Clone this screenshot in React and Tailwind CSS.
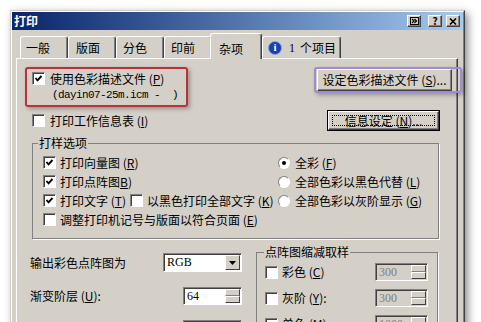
import React from 'react'

const U = ({ children }) => <span className="underline underline-offset-1">{children}</span>

function Check({ checked }) {
  return (
    <span className="w-[13px] h-[13px] shrink-0 bg-white border border-t-[#808080] border-l-[#808080] border-b-white border-r-white shadow-[inset_1px_1px_0_#404040] flex items-center justify-center">
      {checked && (
        <svg width="9" height="9" viewBox="0 0 9 9">
          <path d="M1.5 4 L3.5 6.3 L7.5 2" fill="none" stroke="#000" strokeWidth="1.9" />
        </svg>
      )}
    </span>
  )
}

function Radio({ checked }) {
  return (
    <span className="w-[12px] h-[12px] shrink-0 rounded-full bg-white border border-t-[#808080] border-l-[#808080] border-b-white border-r-white flex items-center justify-center">
      {checked && <span className="w-[4px] h-[4px] rounded-full bg-black" />}
    </span>
  )
}

function TitleBtn({ children }) {
  return (
    <span className="w-[14px] h-[12px] bg-[#d4d0c8] border border-t-white border-l-white border-r-[#404040] border-b-[#404040] shadow-[inset_-1px_-1px_0_#808080] flex items-center justify-center text-[10px] font-bold leading-none text-black">
      {children}
    </span>
  )
}

function Spin({ value, disabled, cls }) {
  return (
    <div className={`${cls} h-[18px] flex border border-t-[#808080] border-l-[#808080] border-b-white border-r-white shadow-[inset_1px_1px_0_#404040] ${disabled ? 'bg-[#d4d0c8] text-[#808080]' : 'bg-white text-black'}`}>
      <span className="flex-1 pl-[3px] leading-[16px] font-['Liberation_Serif',serif] text-[12px]">{value}</span>
      <span className="w-[16px] flex flex-col py-[1px] pr-[1px]">
        <span className="flex-1 bg-[#d4d0c8] border border-t-white border-l-white border-r-[#404040] border-b-[#808080]" />
        <span className="flex-1 bg-[#d4d0c8] border border-t-white border-l-white border-r-[#404040] border-b-[#404040]" />
      </span>
    </div>
  )
}

const TABS = [
  { label: '一般', cls: 'pl-[5px]' },
  { label: '版面', cls: 'pl-[7px]' },
  { label: '分色', cls: 'pl-[6px]' },
  { label: '印前', cls: 'pl-[6px]' },
]

export default function App() {
  return (
    <div className="relative w-[481px] h-[322px] overflow-hidden bg-white pl-[10px] pt-[10px] font-['Noto_Sans_CJK_SC','Liberation_Sans',sans-serif] text-[12px] leading-[14px] text-black">
      <div className="w-[455px] h-[340px] bg-[#d4d0c8] border border-t-[#d4d0c8] border-l-[#d4d0c8] border-r-[#404040] border-b-[#404040] shadow-[3px_3px_8px_rgba(0,0,0,0.45)]">
        <div className="h-full flex flex-col border border-t-white border-l-white border-r-[#808080] border-b-[#808080]">
          {/* Title bar */}
          <div className="h-[18px] flex items-center justify-between pl-[2px] pr-[3px] bg-gradient-to-r from-[#0a246a] to-[#a6caf0]">
            <span className="text-white font-bold text-[12px]">打印</span>
            <div className="flex items-center">
              <TitleBtn>
                <svg width="9" height="8" viewBox="0 0 9 8">
                  <rect x="0.5" y="0.5" width="8" height="7" fill="none" stroke="#000" />
                  <path d="M2 2 L4 4 L2 6 M4.5 2 L6.5 4 L4.5 6" fill="none" stroke="#000" strokeWidth="1.2" />
                </svg>
              </TitleBtn>
              <span className="w-[7px]" />
              <TitleBtn>?</TitleBtn>
              <span className="w-[4px]" />
              <TitleBtn>
                <svg width="8" height="7" viewBox="0 0 8 7">
                  <path d="M1 0.5 L7 6.5 M7 0.5 L1 6.5" stroke="#000" strokeWidth="1.6" />
                </svg>
              </TitleBtn>
            </div>
          </div>

          {/* Tabs */}
          <div className="h-[28px] flex items-end pl-[8px]">
            {TABS.map(({ label, cls }) => (
              <div key={label} className={`w-[48px] h-[22px] flex items-center bg-[#d4d0c8] border-t border-l border-r border-t-white border-l-white border-r-[#404040] rounded-t-[3px] shadow-[inset_-1px_0_0_#808080] ${cls}`}>
                {label}
              </div>
            ))}
            <div className="relative z-10 w-[52px] -ml-[2px] h-[26px] -mb-[1px] pl-[8px] pt-[8px] bg-[#d4d0c8] border-t border-l border-r border-t-white border-l-white border-r-[#404040] rounded-t-[3px] shadow-[inset_-1px_0_0_#808080]">
              杂项
            </div>
            <div className="w-[79px] h-[22px] flex items-center pl-[5px] bg-[#d4d0c8] border-t border-l border-r border-t-white border-l-white border-r-[#404040] rounded-t-[3px] shadow-[inset_-1px_0_0_#808080]">
              <span className="w-[14px] h-[14px] rounded-full bg-[#1740b0] border border-[#8aa0e0] flex items-center justify-center text-white font-bold text-[11px] leading-none font-['Liberation_Serif',serif]">i</span>
              <span className="ml-[7px] font-['Liberation_Serif',serif]">1</span>
              <span className="ml-[5px]">个项目</span>
            </div>
          </div>

          {/* Panel */}
          <div className="flex-1 ml-[4px] mr-[5px] pl-[15px] pt-[10px] border border-t-white border-l-white border-r-[#404040] border-b-[#404040] shadow-[inset_-1px_-1px_0_#808080]">
            <div className="flex">
              <div className="w-[285px] pt-[3px]">
                <div className="h-[13px] flex items-center gap-[5px]">
                  <Check checked />
                  <span>使用色彩描述文件 (<U>P</U>)</span>
                </div>
                <div className="ml-[20px] mt-[3px] h-[14px] leading-[14px] font-['Liberation_Mono',monospace] text-[11px] tracking-[-0.6px] whitespace-pre">(dayin07-25m.icm -  )</div>
                <div className="mt-[12px] h-[13px] flex items-center gap-[5px]">
                  <Check />
                  <span>打印工作信息表 (<U>I</U>)</span>
                </div>
              </div>
              <div className="flex flex-col">
                <div className="w-[135px] h-[22px] flex items-center justify-center bg-[#d4d0c8] border border-t-white border-l-white border-r-[#404040] border-b-[#404040] shadow-[inset_-1px_-1px_0_#808080] whitespace-nowrap">
                  设定色彩描述文件 (<U>S</U>)...
                </div>
                <div className="ml-[10px] mt-[19px] w-[113px] h-[21px] border border-black">
                  <div className="h-full flex items-center justify-center p-[3px] border border-t-white border-l-white border-r-[#404040] border-b-[#404040] shadow-[inset_-1px_-1px_0_#808080]">
                    <span className="w-full h-full flex items-center justify-center border border-dotted border-black whitespace-nowrap">
                      信息设定 (<U>N</U>)...
                    </span>
                  </div>
                </div>
              </div>
            </div>

            {/* 打样选项 */}
            <fieldset className="mt-[5px] w-[407px] border border-[#808080] shadow-[1px_1px_0_white]">
              <legend className="ml-[5px] px-[1px] leading-[14px]">打样选项</legend>
              <div className="pl-[10px] pt-[6px] pb-[12px] flex flex-col gap-[6px]">
                <div className="h-[13px] flex items-center">
                  <div className="w-[235px] flex items-center gap-[4px]">
                    <Check checked />
                    <span>打印向量图 (<U>R</U>)</span>
                  </div>
                  <Radio checked />
                  <span className="ml-[5px]">全彩 (<U>F</U>)</span>
                </div>
                <div className="h-[13px] flex items-center">
                  <div className="w-[235px] flex items-center gap-[4px]">
                    <Check checked />
                    <span>打印点阵图<U>B</U>)</span>
                  </div>
                  <Radio />
                  <span className="ml-[5px]">全部色彩以黑色代替 (<U>L</U>)</span>
                </div>
                <div className="h-[13px] flex items-center">
                  <div className="w-[235px] shrink-0 flex items-center whitespace-nowrap">
                    <div className="w-[87px] flex items-center gap-[4px]">
                      <Check checked />
                      <span>打印文字 (<U>T</U>)</span>
                    </div>
                    <Check />
                    <span className="ml-[4px]">以黑色打印全部文字 (<U>K</U>)</span>
                  </div>
                  <Radio />
                  <span className="ml-[5px]">全部色彩以灰阶显示 (<U>G</U>)</span>
                </div>
                <div className="h-[13px] flex items-center gap-[4px]">
                  <Check />
                  <span>调整打印机记号与版面以符合页面 (<U>E</U>)</span>
                </div>
              </div>
            </fieldset>

            {/* Bottom section */}
            <div className="mt-[6px] flex">
              <div className="w-[224px] pt-[8px]">
                <div className="h-[19px] flex items-center">
                  <span className="w-[131px] -ml-[2px]">输出彩色点阵图为</span>
                  <div className="w-[79px] h-[19px] ml-[2px] flex bg-white border border-t-[#808080] border-l-[#808080] border-b-white border-r-white shadow-[inset_1px_1px_0_#404040]">
                    <span className="flex-1 pl-[3px] leading-[17px] font-['Liberation_Serif',serif] text-[12px]">RGB</span>
                    <span className="w-[15px] m-[1px] bg-[#d4d0c8] border border-t-white border-l-white border-r-[#404040] border-b-[#404040] flex items-center justify-center">
                      <svg width="7" height="4" viewBox="0 0 7 4"><path d="M0 0 H7 L3.5 4 Z" fill="#000" /></svg>
                    </span>
                  </div>
                </div>
                <div className="mt-[15px] h-[18px] flex items-center">
                  <span className="w-[151px] -ml-[2px]">渐变阶层 (<U>U</U>):</span>
                  <Spin value="64" cls="w-[59px] ml-[2px]" />
                </div>
                <div className="mt-[15px] h-[18px] flex items-center">
                  <span className="w-[151px] -ml-[2px]" />
                  <Spin value="" cls="w-[59px] ml-[2px]" />
                </div>
              </div>

              <fieldset className="w-[182px] border border-[#808080] shadow-[1px_1px_0_white]">
                <legend className="ml-[7px] px-[1px] leading-[14px]">点阵图缩减取样</legend>
                <div className="pl-[8px] pr-[9px] pt-[4px] pb-[8px] flex flex-col gap-[8px]">
                  <div className="h-[18px] flex items-center">
                    <Check />
                    <span className="ml-[4px]">彩色 (<U>C</U>)</span>
                    <Spin value="300" disabled cls="w-[53px] ml-auto" />
                  </div>
                  <div className="h-[18px] flex items-center">
                    <Check />
                    <span className="ml-[4px]">灰阶 (<U>Y</U>):</span>
                    <Spin value="300" disabled cls="w-[53px] ml-auto" />
                  </div>
                  <div className="h-[18px] flex items-center">
                    <Check />
                    <span className="ml-[4px]">单色 (<U>M</U>):</span>
                    <Spin value="1000" disabled cls="w-[53px] ml-auto" />
                  </div>
                </div>
              </fieldset>
            </div>
          </div>
        </div>
      </div>

      {/* Annotation highlights */}
      <div className="absolute left-[25px] top-[67px] w-[163px] h-[40px] border-2 border-[#b8323a] rounded-[3px] shadow-[2px_2px_4px_rgba(0,0,0,0.3)]" />
      <div className="absolute left-[314px] top-[67px] w-[148px] h-[26px] border-2 border-[#a08ad2] rounded-[3px] shadow-[2px_2px_4px_rgba(0,0,0,0.3)]" />
    </div>
  )
}
